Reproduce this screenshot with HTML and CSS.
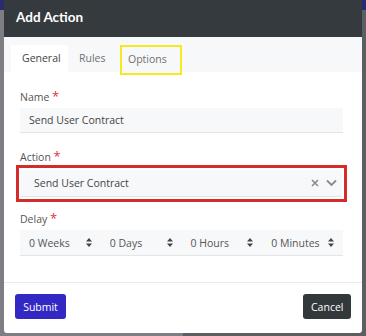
FILE: index.html
```html
<!DOCTYPE html>
<html lang="en">
<head>
    <meta charset="UTF-8">
    <title>Add Action</title>
    <link rel="stylesheet" href="styles.css">
</head>
<body>
    <div class="modal">
        <div class="modal-header">Add Action</div>

        <div class="tabs">
            <div class="tab active">General</div>
            <div class="tab">Rules</div>
            <div class="tab marked">Options</div>
        </div>

        <div class="modal-body">
            <div class="field">
                <label>Name <span class="req">*</span></label>
                <div class="input">Send User Contract</div>
            </div>

            <div class="field field-action">
                <label>Action <span class="req">*</span></label>
                <div class="highlight">
                    <div class="input select">
                        <span>Send User Contract</span>
                        <span class="controls">
                            <svg width="8" height="8" viewBox="0 0 8 8"><path d="M1 1 L7 7 M7 1 L1 7" stroke="#8a8a8a" stroke-width="1.6"/></svg>
                            <svg width="11" height="8" viewBox="0 0 11 8"><path d="M1 1.5 L5.5 6 L10 1.5" fill="none" stroke="#8a8a8a" stroke-width="1.8"/></svg>
                        </span>
                    </div>
                </div>
            </div>

            <div class="field">
                <label>Delay <span class="req">*</span></label>
                <div class="delay">
                    <div class="unit">0 Weeks <svg class="sort" width="6" height="9" viewBox="0 0 6 9"><path d="M0 3.5 L3 0 L6 3.5 Z M0 5.5 L3 9 L6 5.5 Z" fill="#444"/></svg></div>
                    <div class="unit">0 Days <svg class="sort" width="6" height="9" viewBox="0 0 6 9"><path d="M0 3.5 L3 0 L6 3.5 Z M0 5.5 L3 9 L6 5.5 Z" fill="#444"/></svg></div>
                    <div class="unit">0 Hours <svg class="sort" width="6" height="9" viewBox="0 0 6 9"><path d="M0 3.5 L3 0 L6 3.5 Z M0 5.5 L3 9 L6 5.5 Z" fill="#444"/></svg></div>
                    <div class="unit">0 Minutes <svg class="sort" width="6" height="9" viewBox="0 0 6 9"><path d="M0 3.5 L3 0 L6 3.5 Z M0 5.5 L3 9 L6 5.5 Z" fill="#444"/></svg></div>
                </div>
            </div>
        </div>

        <div class="modal-footer">
            <button class="btn submit">Submit</button>
            <button class="btn cancel">Cancel</button>
        </div>
    </div>
</body>
</html>
```

FILE: styles.css
```css
body {
    margin: 0;
    height: 336px;
    overflow: hidden;
    font-family: 'Open Sans', 'Noto Sans', sans-serif;
    color: #555;
    background:
        linear-gradient(#2c2b6e, #2c2b6e) top / 100% 10px no-repeat,
        linear-gradient(90deg, #7d7d83 0, #7d7d83 50%, #5d5e61 50%, #5d5e61 100%);
}
.modal {
    margin-left: 4px;
    width: 358px;
    height: 333px;
    background-color: white;
    border-radius: 0 0 3px 3px;
    display: flex;
    flex-direction: column;
}
.modal-header {
    background-color: #343a3d;
    color: white;
    height: 37px;
    line-height: 35px;
    padding-left: 12px;
    font-family: 'Lato', 'Open Sans', sans-serif;
    font-size: 13.5px;
    font-weight: 700;
}
.tabs {
    background-color: #f7f8fa;
    display: flex;
    padding: 8px 0 0 7px;
    height: 27px;
}
.tab {
    font-size: 10.5px;
    color: #707070;
    padding: 0 11px;
    line-height: 27px;
    box-sizing: border-box;
}
.tab.active {
    background-color: white;
    color: #444;
    width: 57px;
}
.tab:nth-child(2) {
    width: 52px;
}
.tab.marked {
    border: 2px solid #f5ea22;
    height: 30px;
    line-height: 25px;
    width: 62px;
    padding: 0 6px;
}
.modal-body {
    padding: 17px 19px 0 12px;
    flex: 1;
    border-bottom: 1px solid #eaeaea;
}
.field {
    margin-bottom: 16px;
}
.field-action {
    margin-bottom: 9px;
}
label {
    display: block;
    font-size: 10.5px;
    color: #555;
    margin-left: 4px;
    margin-bottom: 3px;
    line-height: 15px;
}
.field-action label {
    margin-bottom: 0;
}
.req {
    color: #e0303c;
    font-size: 13px;
}
.input {
    margin-left: 4px;
    height: 24px;
    line-height: 24px;
    background-color: #f7f8fa;
    border-bottom: 1px solid #e3e4e6;
    padding-left: 9px;
    font-size: 10.5px;
    color: #444;
}
.highlight {
    border: 3px solid #d62b2b;
    padding: 2px;
    margin-right: -4px;
}
.highlight .input {
    margin-left: 0;
    height: 26px;
    line-height: 26px;
    padding-left: 13px;
    display: flex;
    justify-content: space-between;
    align-items: center;
}
.controls {
    display: flex;
    align-items: center;
    gap: 7px;
    padding-right: 5px;
}
.delay {
    margin-left: 4px;
    margin-top: 2px;
    display: grid;
    grid-template-columns: repeat(4, 1fr);
    background-color: #f7f8fa;
    border-bottom: 1px solid #e3e4e6;
}
.unit {
    display: flex;
    justify-content: space-between;
    align-items: center;
    height: 25px;
    padding: 0 9px;
    font-size: 10.5px;
    color: #555;
}
.modal-footer {
    display: flex;
    justify-content: space-between;
    padding: 11px 11px 14px 11px;
}
.btn {
    font-family: 'Open Sans', 'Noto Sans', sans-serif;
    font-size: 10.5px;
    color: white;
    border: none;
    border-radius: 3px;
    height: 25px;
    padding: 0 8px;
}
.submit {
    background-color: #3328c4;
    width: 51px;
}
.cancel {
    background-color: #33383b;
    width: 48px;
}
```
